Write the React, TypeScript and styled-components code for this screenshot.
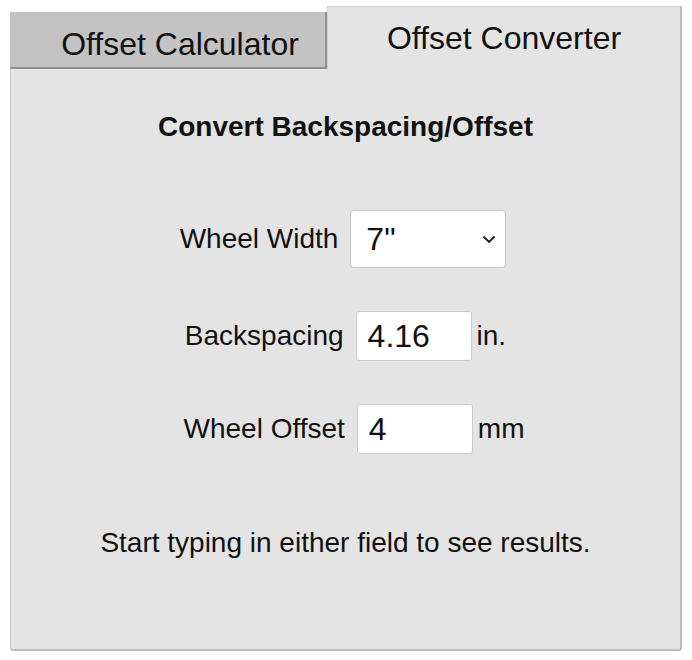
import React from "react";
import styled, { createGlobalStyle } from "styled-components";

const GlobalStyle = createGlobalStyle`
  body {
    margin: 0;
    background: #ffffff;
    font-family: "Liberation Sans", Arial, sans-serif;
    color: #111111;
  }
`;

const Page = styled.div`
  width: 672px;
  padding: 6px 10px 0 10px;
`;

const TabRow = styled.div`
  display: flex;
  align-items: flex-end;
`;

const Tab = styled.div<{ $active?: boolean }>`
  box-sizing: border-box;
  display: flex;
  justify-content: center;
  font-size: 32px;
  line-height: 37px;
  padding-top: 14px;
  ${({ $active }) =>
    $active
      ? `
    width: 355px;
    height: 63px;
    background: #e4e4e4;
    border-top: 1px solid #d2d2d2;
    border-left: 1px solid #d2d2d2;
    border-right: 2px solid #bbbbbb;
    padding-top: 13px;
  `
      : `
    width: 317px;
    height: 57px;
    background: #c3c3c3;
    border-right: 2px solid #8f8f8f;
    border-bottom: 2px solid #8f8f8f;
    padding-left: 25px;
    color: #111111;
  `}
`;

const Panel = styled.div`
  box-sizing: border-box;
  width: 672px;
  height: 582px;
  background: #e4e4e4;
  border-left: 1px solid #c8c8c8;
  border-right: 2px solid #bbbbbb;
  border-bottom: 2px solid #bbbbbb;
  border-radius: 0 0 3px 3px;
  padding-top: 42px;
  display: flex;
  flex-direction: column;
  align-items: center;
`;

const Heading = styled.h2`
  margin: 0 0 67px 0;
  font-size: 28px;
  line-height: 32px;
  font-weight: bold;
`;

const Form = styled.div`
  display: flex;
  flex-direction: column;
  align-items: center;
  gap: 43px;
`;

const Row = styled.div<{ $shift?: number }>`
  display: flex;
  align-items: center;
  font-size: 28px;
  padding-left: ${({ $shift }) => ($shift && $shift > 0 ? $shift : 0)}px;
  padding-right: ${({ $shift }) => ($shift && $shift < 0 ? -$shift : 0)}px;
`;

const Label = styled.span`
  margin-right: 12px;
`;

const Unit = styled.span`
  margin-left: 5px;
`;

const SelectWrap = styled.div`
  position: relative;
  width: 156px;
  height: 58px;
`;

const Select = styled.select`
  appearance: none;
  box-sizing: border-box;
  width: 100%;
  height: 100%;
  background: #ffffff;
  border: 1px solid #c6c6c6;
  border-radius: 4px;
  padding: 0 0 0 15px;
  font-family: "Liberation Sans", Arial, sans-serif;
  font-size: 32px;
  color: #111111;
  outline: none;
`;

const Chevron = styled.svg`
  position: absolute;
  right: 11px;
  top: 26px;
  pointer-events: none;
`;

const Field = styled.input`
  box-sizing: border-box;
  width: 116px;
  height: 50px;
  background: #ffffff;
  border: 1px solid #cccccc;
  border-radius: 3px;
  padding: 0 0 0 11px;
  font-family: "Liberation Sans", Arial, sans-serif;
  font-size: 32px;
  color: #111111;
  outline: none;
`;

const Note = styled.p`
  margin: 73px 0 0 0;
  font-size: 28px;
  line-height: 32px;
`;

export default function App() {
  return (
    <Page>
      <GlobalStyle />
      <TabRow>
        <Tab>Offset Calculator</Tab>
        <Tab $active>Offset Converter</Tab>
      </TabRow>
      <Panel>
        <Heading>Convert Backspacing/Offset</Heading>
        <Form>
          <Row $shift={-5}>
            <Label>Wheel Width</Label>
            <SelectWrap>
              <Select defaultValue="7">
                <option value="7">7"</option>
                <option value="8">8"</option>
                <option value="9">9"</option>
              </Select>
              <Chevron width="12" height="7" viewBox="0 0 12 7">
                <path d="M1 1l5 5 5-5" fill="none" stroke="#222" strokeWidth="1.8" strokeLinecap="round" strokeLinejoin="round" />
              </Chevron>
            </SelectWrap>
          </Row>
          <Row>
            <Label>Backspacing</Label>
            <Field defaultValue="4.16" />
            <Unit>in.</Unit>
          </Row>
          <Row $shift={17}>
            <Label>Wheel Offset</Label>
            <Field defaultValue="4" />
            <Unit>mm</Unit>
          </Row>
        </Form>
        <Note>Start typing in either field to see results.</Note>
      </Panel>
    </Page>
  );
}
